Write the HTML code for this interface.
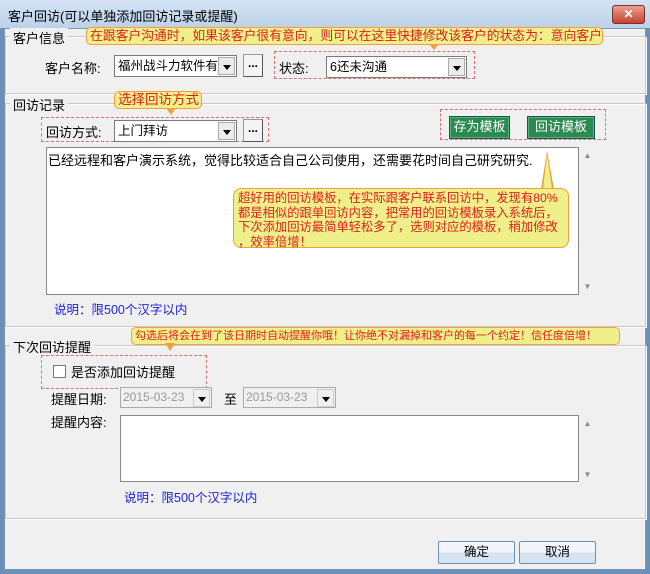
<!DOCTYPE html>
<html><head><meta charset="utf-8"><style>
*{box-sizing:border-box;margin:0;padding:0}
body{width:650px;height:574px;overflow:hidden;background:#6a8fb8;font-family:"Liberation Sans","Noto Sans CJK SC",sans-serif;font-size:12px;color:#000;position:relative}
.a{position:absolute}
#title{left:0;top:0;width:650px;height:28px;background:linear-gradient(#d3e3f4,#bcd2ea);}
#body{left:4px;top:28px;width:642px;height:542px;background:#f0f0f0;border:1px solid #7a96b8}
.grp{position:absolute;border:1px solid #c8c8c8;box-shadow:inset 1px 1px 0 #fff,1px 1px 0 #fff}
.gl{position:absolute;background:#f0f0f0;padding:0 3px;font-size:13px}
.combo{position:absolute;background:#fff;border:1px solid #7a7a7a;height:22px;line-height:20px;padding-left:3px;font-size:12.5px;white-space:nowrap;overflow:hidden}
.arr{position:absolute;right:1px;top:1px;width:17px;height:18px;background:#ececec;border:1px solid #aaa}
.arr:after{content:"";position:absolute;left:4px;top:7px;border:4px solid transparent;border-top:5px solid #000}
.dots{position:absolute;width:20px;height:23px;background:#f4f4f4;border:1px solid #999;border-right-color:#555;border-bottom-color:#555;text-align:center;line-height:16px;font-weight:bold}
.dash{position:absolute;border:1px dashed #e07070}
.tip{position:absolute;background:#f0f08a;border:1px solid #f0a040;border-radius:5px;color:#e02020;font-size:12.5px;white-space:nowrap;line-height:16px;padding-left:3px}
.gbtn{position:absolute;background:#2a8a50;border:1px solid #155;color:#fff;font-size:13px;text-align:center;line-height:20px;box-shadow:inset 0 0 0 1px #5cb07c}
.ta{position:absolute;background:#fff;border:1px solid #888}
.sb{position:absolute;background:#f0f0f0;color:#888;font-size:8px;text-align:center}
.blue{position:absolute;color:#2020e0;font-size:12.5px}
.btn{position:absolute;width:77px;height:23px;border:1px solid #7090b0;border-radius:2px;background:linear-gradient(#f2f6fb 50%,#d6e3f1 51%);text-align:center;line-height:21px;font-size:12.5px}
.date{position:absolute;height:21px;border:1px solid #aaa;background:#f0f0f0;color:#999;padding-left:2px;line-height:19px;font-size:12px}
</style></head><body>
<div id="title" class="a"></div>
<div class="a" style="left:8px;top:6px;font-size:13px">客户回访(可以单独添加回访记录或提醒)</div>
<div class="a" style="left:612px;top:5px;width:33px;height:19px;border-radius:3px;background:linear-gradient(#e8a090,#c84030);border:1px solid #803020;color:#fff;text-align:center;font-weight:bold;line-height:16px">✕</div>
<div id="body" class="a"></div>

<div class="grp" style="left:5px;top:36px;width:641px;height:58px"></div>
<div class="gl" style="left:10px;top:28px">客户信息</div>
<div class="grp" style="left:5px;top:103px;width:641px;height:224px"></div>
<div class="gl" style="left:10px;top:95px">回访记录</div>
<div class="grp" style="left:5px;top:345px;width:641px;height:174px"></div>
<div class="gl" style="left:10px;top:337px">下次回访提醒</div>

<div class="dash" style="left:274px;top:51px;width:201px;height:28px"></div>
<div class="a" style="left:45px;top:58px;font-size:13px">客户名称:</div>
<div class="combo" style="left:114px;top:55px;width:123px">福州战斗力软件有<div class="arr"></div></div>
<div class="dots" style="left:243px;top:54px">...</div>
<div class="a" style="left:279px;top:58px;font-size:13px">状态:</div>
<div class="combo" style="left:326px;top:56px;width:141px">6还未沟通<div class="arr"></div></div>
<div class="tip" style="left:86px;top:27px;width:517px;height:18px;font-size:12.8px">在跟客户沟通时，如果该客户很有意向，则可以在这里快捷修改该客户的状态为：意向客户</div>
<div class="a" style="left:429px;top:44px;border:5px solid transparent;border-top:6px solid #f0a040"></div>

<div class="dash" style="left:41px;top:117px;width:228px;height:25px"></div>
<div class="a" style="left:46px;top:122px;font-size:13px">回访方式:</div>
<div class="combo" style="left:114px;top:120px;width:123px">上门拜访<div class="arr"></div></div>
<div class="dots" style="left:243px;top:119px">...</div>
<div class="tip" style="left:114px;top:91px;width:88px;height:18px;font-size:13.5px">选择回访方式</div>
<div class="a" style="left:166px;top:108px;border:5px solid transparent;border-top:7px solid #f0a040"></div>
<div class="dash" style="left:440px;top:109px;width:166px;height:31px"></div>
<div class="gbtn" style="left:449px;top:116px;width:61px;height:23px">存为模板</div>
<div class="gbtn" style="left:527px;top:116px;width:68px;height:23px">回访模板</div>

<div class="ta" style="left:46px;top:147px;width:533px;height:148px"></div>
<div class="sb" style="left:579px;top:147px;width:17px;height:148px"><div style="margin-top:4px">▲</div><div style="margin-top:122px">▼</div></div>
<div class="a" style="left:48px;top:150px;font-size:13px">已经远程和客户演示系统，觉得比较适合自己公司使用，还需要花时间自己研究研究.</div>
<div class="a" style="left:541px;top:151px;width:0;height:0;border-left:6px solid transparent;border-right:7px solid transparent;border-bottom:38px solid #f0a040"></div>
<div class="a" style="left:543px;top:155px;width:0;height:0;border-left:4px solid transparent;border-right:5px solid transparent;border-bottom:34px solid #f0f08a"></div>
<div class="tip" style="left:233px;top:188px;width:336px;height:60px;border-radius:8px;line-height:14.5px;padding:2px 4px;font-size:12.3px">超好用的回访模板，在实际跟客户联系回访中，发现有80%<br>都是相似的跟单回访内容，把常用的回访模板录入系统后，<br>下次添加回访最简单轻松多了，选则对应的模板，稍加修改<br>，效率倍增！</div>
<div class="blue" style="left:54px;top:299px">说明：限500个汉字以内</div>

<div class="dash" style="left:41px;top:355px;width:166px;height:34px"></div>
<div class="a" style="left:53px;top:365px;width:13px;height:13px;background:#fff;border:1px solid #777"></div>
<div class="a" style="left:71px;top:362px;font-size:13px">是否添加回访提醒</div>
<div class="tip" style="left:131px;top:327px;width:489px;height:18px;font-size:11px;overflow:hidden">勾选后将会在到了该日期时自动提醒你哦！让你绝不对漏掉和客户的每一个约定！信任度倍增！</div>
<div class="a" style="left:165px;top:343px;border:5px solid transparent;border-top:8px solid #f0a040"></div>
<div class="a" style="left:51px;top:389px;font-size:13px">提醒日期:</div>
<div class="date" style="left:120px;top:387px;width:92px">2015-03-23<div class="arr" style="background:#f0f0f0;border-color:#ccc"></div></div>
<div class="a" style="left:224px;top:389px;font-size:13px">至</div>
<div class="date" style="left:243px;top:387px;width:93px">2015-03-23<div class="arr" style="background:#f0f0f0;border-color:#ccc"></div></div>
<div class="a" style="left:51px;top:412px;font-size:13px">提醒内容:</div>
<div class="ta" style="left:120px;top:415px;width:459px;height:67px"></div>
<div class="sb" style="left:579px;top:415px;width:17px;height:67px"><div style="margin-top:4px">▲</div><div style="margin-top:42px">▼</div></div>
<div class="blue" style="left:124px;top:487px">说明：限500个汉字以内</div>

<div class="btn" style="left:438px;top:541px">确定</div>
<div class="btn" style="left:519px;top:541px">取消</div>
</body></html>
